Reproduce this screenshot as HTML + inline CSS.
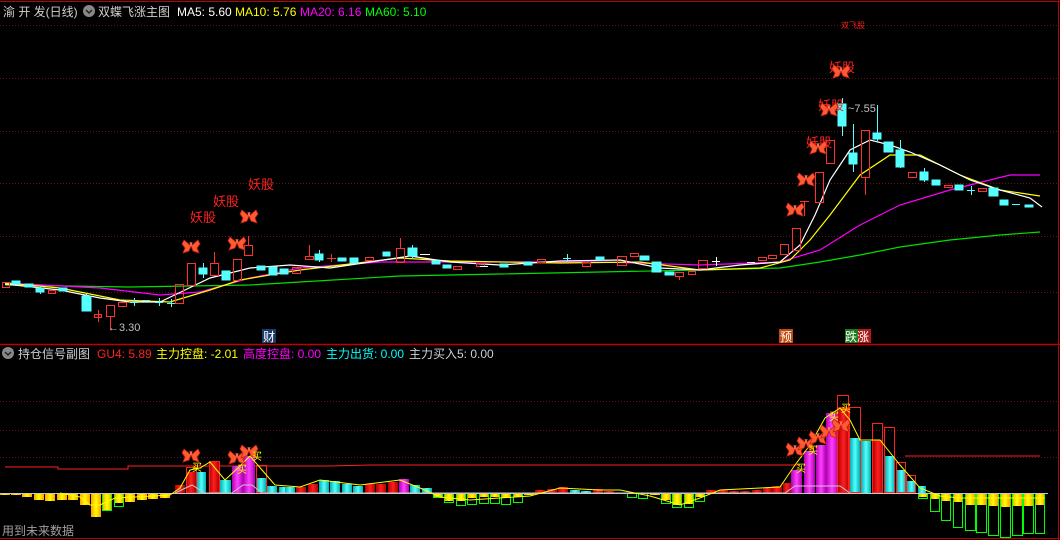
<!DOCTYPE html>
<html><head><meta charset="utf-8"><style>
html,body{margin:0;padding:0;background:#000;width:1060px;height:540px;overflow:hidden}
svg{display:block}
text{font-family:"Liberation Sans","Noto Sans CJK SC",sans-serif}
</style></head><body>
<svg width="1060" height="540" viewBox="0 0 1060 540" xmlns="http://www.w3.org/2000/svg">
<defs>
<linearGradient id="yg" x1="0" x2="1" y1="0" y2="0"><stop offset="0" stop-color="#ffa000"/><stop offset="0.5" stop-color="#ffff00"/><stop offset="1" stop-color="#ffa000"/></linearGradient>
<linearGradient id="cg" x1="0" x2="1"><stop offset="0" stop-color="#00b0b0"/><stop offset="0.5" stop-color="#55ffff"/><stop offset="1" stop-color="#00b0b0"/></linearGradient>
<linearGradient id="rg" x1="0" x2="1"><stop offset="0" stop-color="#b00000"/><stop offset="0.5" stop-color="#ff2020"/><stop offset="1" stop-color="#b00000"/></linearGradient>
<linearGradient id="mg" x1="0" x2="1"><stop offset="0" stop-color="#b000b0"/><stop offset="0.5" stop-color="#ff40ff"/><stop offset="1" stop-color="#b000b0"/></linearGradient>
<g id="bf"><path d="M0 0 L-7 -6 L-9 -2 L-6 2 L-8 7 L-2 5 Z M0 0 L7 -6 L9 -2 L6 2 L8 7 L2 5 Z" fill="#ff5a32" stroke="#c02010" stroke-width="0.8"/><path d="M-1 -4 L0 0 L1 -4" stroke="#ff8060" fill="none"/></g>
</defs>
<line x1="0" y1="1.5" x2="1060" y2="1.5" stroke="#c00000"/>
<line x1="1058.5" y1="0" x2="1058.5" y2="540" stroke="#c00000"/>
<line x1="0" y1="344.5" x2="1060" y2="344.5" stroke="#c00000" stroke-width="1.5"/>
<line x1="0" y1="538.5" x2="1060" y2="538.5" stroke="#c00000"/>
<g stroke="#6a1010" stroke-dasharray="1 2">
<line x1="0" y1="25.5" x2="1058" y2="25.5"/><line x1="0" y1="78.5" x2="1058" y2="78.5"/><line x1="0" y1="131.5" x2="1058" y2="131.5"/><line x1="0" y1="183.5" x2="1058" y2="183.5"/><line x1="0" y1="236.5" x2="1058" y2="236.5"/><line x1="0" y1="292.5" x2="1058" y2="292.5"/>
<line x1="0" y1="401.5" x2="1058" y2="401.5"/><line x1="0" y1="430.5" x2="1058" y2="430.5"/><line x1="0" y1="457.5" x2="1058" y2="457.5"/>
</g>
<text x="3" y="16" font-size="12" fill="#d0d0d0">渝 开 发(日线)</text>
<circle cx="89" cy="11" r="6" fill="#888"/><path d="M86 10 L89 13 L92 10" stroke="#222" fill="none" stroke-width="1.5"/>
<text x="98" y="16" font-size="12" fill="#d0d0d0">双蝶飞涨主图</text>
<text x="177" y="16" font-size="12" fill="#ffffff">MA5: 5.60</text>
<text x="235" y="16" font-size="12" fill="#ffff00">MA10: 5.76</text>
<text x="300" y="16" font-size="12" fill="#ff00ff">MA20: 6.16</text>
<text x="365" y="16" font-size="12" fill="#00ff00">MA60: 5.10</text>
<text x="841" y="28" font-size="8" fill="#ff2020">双飞股</text>
<g fill="none" stroke-width="1.2">
<polyline stroke="#00e000" points="5,285 130,287 250,285 300,282 400,276 500,274 600,272 700,270 780,268 820,262 860,255 900,247 950,240 1000,235 1040,232"/>
<polyline stroke="#ff00ff" points="5,283 100,288 160,295 200,292 250,278 300,268 380,262 450,262 600,262 700,265 780,262 820,250 860,225 900,205 950,190 990,180 1010,175 1040,175"/>
<polyline stroke="#ffff00" points="5,283 60,288 120,300 170,302 210,290 240,280 300,270 400,258 450,261 560,263 640,262 700,270 760,268 790,260 810,240 830,215 860,175 890,155 920,155 960,175 1000,190 1040,196"/>
<polyline stroke="#ffffff" points="5,284 60,290 100,298 130,302 160,302 185,290 210,278 250,268 290,265 330,268 370,262 410,256 450,262 500,265 560,261 620,260 660,268 700,270 740,265 780,262 800,245 815,215 830,180 850,150 870,140 890,145 910,152 940,165 970,180 1000,190 1030,198 1042,207"/>
</g>
<g fill="#55ffff" stroke="#55ffff">
<rect x="12" y="281" width="8" height="3"/><rect x="25" y="284" width="8" height="3"/><rect x="36" y="288" width="8" height="4"/><rect x="59" y="288" width="8" height="3"/>
<rect x="82" y="296" width="9" height="15"/><rect x="199" y="268" width="8" height="6"/><rect x="222" y="271" width="8" height="9"/><rect x="257" y="266" width="8" height="4"/><rect x="269" y="267" width="8" height="8"/><rect x="280" y="269" width="8" height="5"/><rect x="315" y="254" width="8" height="6"/><rect x="338" y="258" width="8" height="3"/><rect x="350" y="258" width="8" height="5"/><rect x="383" y="252" width="7" height="4"/><rect x="408" y="248" width="9" height="8"/><rect x="432" y="261" width="8" height="3"/><rect x="443" y="265" width="8" height="3"/><rect x="500" y="264" width="8" height="3"/><rect x="524" y="262" width="8" height="3"/><rect x="596" y="257" width="8" height="3"/><rect x="640" y="256" width="9" height="4"/><rect x="652" y="262" width="9" height="10"/><rect x="665" y="272" width="9" height="3"/>
<rect x="838" y="104" width="8" height="22"/><rect x="849" y="153" width="8" height="11"/><rect x="873" y="133" width="8" height="6"/><rect x="884" y="142" width="9" height="10"/><rect x="896" y="150" width="8" height="17"/><rect x="920" y="172" width="8" height="8"/><rect x="932" y="180" width="8" height="5"/><rect x="955" y="185" width="8" height="5"/><rect x="989" y="188" width="9" height="8"/><rect x="1000" y="200" width="8" height="5"/><rect x="1025" y="205" width="8" height="2"/>
</g>
<g stroke="#55ffff">
<line x1="40.5" y1="286" x2="40.5" y2="294"/><line x1="86.5" y1="294" x2="86.5" y2="311"/><line x1="203.5" y1="263" x2="203.5" y2="278"/><line x1="319.5" y1="250" x2="319.5" y2="262"/><line x1="412.5" y1="245" x2="412.5" y2="258"/>
<line x1="842.5" y1="98" x2="842.5" y2="136"/><line x1="853.5" y1="124" x2="853.5" y2="172"/><line x1="877.5" y1="105" x2="877.5" y2="142"/><line x1="900.5" y1="140" x2="900.5" y2="168"/><line x1="924.5" y1="168" x2="924.5" y2="182"/>
<line x1="130" y1="302.5" x2="138" y2="302.5"/><line x1="142" y1="300.5" x2="150" y2="300.5"/><line x1="155" y1="302.5" x2="163" y2="302.5"/><line x1="167" y1="303.5" x2="176" y2="303.5"/><line x1="134.5" y1="298" x2="134.5" y2="306"/><line x1="159.5" y1="298" x2="159.5" y2="306"/><line x1="171.5" y1="299" x2="171.5" y2="307"/>
<line x1="563" y1="258.5" x2="571" y2="258.5"/><line x1="567.5" y1="254" x2="567.5" y2="262"/><line x1="967" y1="190.5" x2="975" y2="190.5"/><line x1="971.5" y1="186" x2="971.5" y2="195"/><line x1="1012" y1="204.5" x2="1020" y2="204.5"/>
</g>
<g fill="none" stroke="#ff3030">
<rect x="2.5" y="282.5" width="7" height="5"/><rect x="48.5" y="290.5" width="7" height="3"/><rect x="94.5" y="314.5" width="7" height="3"/><rect x="106.5" y="305.5" width="8" height="11"/><rect x="118.5" y="302.5" width="8" height="4"/><rect x="175.5" y="284.5" width="8" height="19"/><rect x="187.5" y="263.5" width="8" height="22"/><rect x="210.5" y="263.5" width="8" height="12"/><rect x="233.5" y="259.5" width="8" height="21"/><rect x="244.5" y="245.5" width="8" height="10"/><rect x="292.5" y="267.5" width="8" height="6"/><rect x="305.5" y="256.5" width="8" height="3"/><rect x="365.5" y="257.5" width="8" height="3"/><rect x="396.5" y="248.5" width="8" height="14"/><rect x="453.5" y="266.5" width="8" height="3"/><rect x="476.5" y="263.5" width="8" height="3"/><rect x="537.5" y="259.5" width="8" height="3"/><rect x="582.5" y="262.5" width="8" height="4"/><rect x="617.5" y="256.5" width="9" height="9"/><rect x="630.5" y="253.5" width="8" height="3"/><rect x="675.5" y="272.5" width="8" height="4"/><rect x="688.5" y="271.5" width="7" height="3"/><rect x="698.5" y="260.5" width="9" height="8"/><rect x="758.5" y="257.5" width="8" height="3"/><rect x="768.5" y="255.5" width="8" height="3"/><rect x="780.5" y="244.5" width="8" height="10"/><rect x="792.5" y="228.5" width="8" height="22"/><rect x="815.5" y="172.5" width="8" height="30"/><rect x="826.5" y="140.5" width="8" height="23"/><rect x="861.5" y="130.5" width="8" height="47"/><rect x="908.5" y="172.5" width="8" height="5"/><rect x="944.5" y="185.5" width="8" height="2"/><rect x="978.5" y="188.5" width="8" height="3"/>
<line x1="98.5" y1="310" x2="98.5" y2="322"/><line x1="110.5" y1="316" x2="110.5" y2="330"/><line x1="214.5" y1="252" x2="214.5" y2="263"/><line x1="248.5" y1="236" x2="248.5" y2="245"/><line x1="309.5" y1="245" x2="309.5" y2="256"/><line x1="400.5" y1="238" x2="400.5" y2="248"/><line x1="679.5" y1="276" x2="679.5" y2="280"/><line x1="804.5" y1="201" x2="804.5" y2="216"/><line x1="800" y1="201.5" x2="809" y2="201.5"/><line x1="865.5" y1="177" x2="865.5" y2="195"/><line x1="327" y1="258.5" x2="336" y2="258.5"/><line x1="331.5" y1="254" x2="331.5" y2="262"/>
</g>
<g stroke="#ffffff"><line x1="420" y1="254.5" x2="430" y2="254.5"/><line x1="712" y1="261.5" x2="720" y2="261.5"/><line x1="716.5" y1="257" x2="716.5" y2="266"/><line x1="747" y1="262.5" x2="755" y2="262.5"/><line x1="480" y1="266.5" x2="488" y2="266.5"/></g>
<g font-size="13" fill="#ff2020"><text x="190" y="222">妖股</text><text x="213" y="206">妖股</text><text x="248" y="189">妖股</text><text x="806" y="147">妖股</text><text x="818" y="110">妖股</text><text x="829" y="72">妖股</text></g>
<g><use href="#bf" x="191" y="246"/><use href="#bf" x="237" y="243"/><use href="#bf" x="249" y="216"/><use href="#bf" x="795" y="209"/><use href="#bf" x="806" y="179"/><use href="#bf" x="818" y="147"/><use href="#bf" x="829" y="109"/><use href="#bf" x="841" y="71"/></g>
<text x="848" y="112" font-size="11" fill="#c0c0c0">~7.55</text>
<text x="108" y="331" font-size="11" fill="#c0c0c0">←3.30</text>
<rect x="262" y="329" width="14" height="14" fill="#1a3a6a"/><text x="263" y="341" font-size="12" fill="#fff">财</text>
<rect x="779" y="329" width="14" height="14" fill="#c04a10"/><text x="780" y="341" font-size="12" fill="#fff">预</text>
<rect x="845" y="329" width="13" height="14" fill="#1a7a1a"/><rect x="858" y="329" width="13" height="14" fill="#b01818"/><text x="845" y="341" font-size="12" fill="#fff">跌涨</text>
<circle cx="8" cy="353" r="6" fill="#888"/><path d="M5 352 L8 355 L11 352" stroke="#222" fill="none" stroke-width="1.5"/>
<text x="18" y="358" font-size="12" fill="#d0d0d0">持仓信号副图</text>
<text x="97" y="358" font-size="12" fill="#ff2020">GU4: 5.89</text>
<text x="156" y="358" font-size="12" fill="#ffff00">主力控盘: -2.01</text>
<text x="243" y="358" font-size="12" fill="#ff00ff">高度控盘: 0.00</text>
<text x="326" y="358" font-size="12" fill="#00ffff">主力出货: 0.00</text>
<text x="409" y="358" font-size="12" fill="#d0d0d0">主力买入5: 0.00</text>
<polyline fill="none" stroke="#ff2020" points="5,467 58,467 58,469 128,469 128,466 330,466 370,465 800,465"/>
<polyline fill="none" stroke="#ff2020" points="905,456 1040,456"/>
<g fill="url(#yg)">
<rect x="0" y="493" width="10" height="2"/><rect x="11" y="493" width="10" height="2"/><rect x="22" y="493" width="10" height="4"/><rect x="34" y="493" width="10" height="7"/><rect x="45" y="493" width="10" height="8"/><rect x="57" y="493" width="10" height="7"/><rect x="68" y="493" width="10" height="7"/><rect x="80" y="493" width="10" height="12"/><rect x="91" y="493" width="10" height="24"/><rect x="102" y="493" width="10" height="18"/><rect x="114" y="493" width="10" height="10"/><rect x="125" y="493" width="10" height="9"/><rect x="137" y="493" width="10" height="7"/><rect x="148" y="493" width="10" height="6"/><rect x="160" y="493" width="10" height="5"/>
<rect x="433" y="493" width="10" height="4"/><rect x="444" y="493" width="10" height="8"/><rect x="456" y="493" width="10" height="8"/><rect x="467" y="493" width="10" height="5"/><rect x="479" y="493" width="10" height="4"/><rect x="490" y="493" width="10" height="4"/><rect x="501" y="493" width="10" height="5"/><rect x="513" y="493" width="10" height="4"/><rect x="524" y="493" width="10" height="2"/>
<rect x="650" y="493" width="10" height="2"/><rect x="661" y="493" width="10" height="7"/><rect x="672" y="493" width="10" height="12"/><rect x="684" y="493" width="10" height="11"/><rect x="695" y="493" width="10" height="4"/>
<rect x="918" y="493" width="10" height="4"/><rect x="930" y="493" width="10" height="6"/><rect x="941" y="493" width="10" height="8"/><rect x="953" y="493" width="10" height="9"/><rect x="965" y="493" width="10" height="12"/><rect x="976" y="493" width="10" height="12"/><rect x="988" y="493" width="10" height="13"/><rect x="1000" y="493" width="10" height="14"/><rect x="1012" y="493" width="10" height="13"/><rect x="1023" y="493" width="10" height="13"/><rect x="1035" y="493" width="10" height="12"/>
</g>
<g fill="none" stroke="#00ff00">
<rect x="102.5" y="493.5" width="9" height="17"/><rect x="114.5" y="493.5" width="9" height="13"/>
<rect x="433.5" y="493.5" width="9" height="4"/><rect x="444.5" y="493.5" width="9" height="9"/><rect x="456.5" y="493.5" width="9" height="12"/><rect x="467.5" y="493.5" width="9" height="11"/><rect x="479.5" y="493.5" width="9" height="10"/><rect x="490.5" y="493.5" width="9" height="10"/><rect x="501.5" y="493.5" width="9" height="11"/><rect x="513.5" y="493.5" width="9" height="9"/>
<rect x="627.5" y="493.5" width="9" height="4"/><rect x="638.5" y="493.5" width="9" height="5"/><rect x="661.5" y="493.5" width="9" height="10"/><rect x="672.5" y="493.5" width="9" height="14"/><rect x="684.5" y="493.5" width="9" height="14"/><rect x="695.5" y="493.5" width="9" height="8"/>
<rect x="918.5" y="493.5" width="9" height="5"/><rect x="930.5" y="493.5" width="9" height="18"/><rect x="941.5" y="493.5" width="9" height="27"/><rect x="953.5" y="493.5" width="9" height="34"/><rect x="965.5" y="493.5" width="10" height="37"/><rect x="976.5" y="493.5" width="10" height="39"/><rect x="988.5" y="493.5" width="10" height="42"/><rect x="1000.5" y="493.5" width="10" height="44"/><rect x="1012.5" y="493.5" width="10" height="42"/><rect x="1023.5" y="493.5" width="10" height="40"/><rect x="1035.5" y="493.5" width="9" height="40"/>
</g>
<g fill="url(#rg)">
<rect x="175" y="485" width="10" height="8"/><rect x="186" y="472" width="10" height="21"/><rect x="209" y="462" width="10" height="31"/><rect x="296" y="487" width="10" height="6"/><rect x="308" y="484" width="10" height="9"/><rect x="365" y="484" width="10" height="9"/><rect x="376" y="484" width="10" height="9"/><rect x="388" y="482" width="10" height="11"/>
<rect x="535" y="490" width="10" height="3"/><rect x="547" y="489" width="10" height="4"/><rect x="558" y="487" width="10" height="6"/><rect x="593" y="489" width="10" height="4"/><rect x="604" y="491" width="10" height="2"/><rect x="706" y="490" width="10" height="3"/><rect x="718" y="490" width="10" height="3"/><rect x="729" y="491" width="10" height="2"/><rect x="740" y="491" width="10" height="2"/><rect x="752" y="490" width="10" height="3"/><rect x="763" y="488" width="9" height="5"/><rect x="772" y="486" width="10" height="7"/><rect x="783" y="483" width="8" height="10"/>
<rect x="838" y="407" width="11" height="86"/><rect x="873" y="440" width="10" height="53"/>
</g>
<g fill="url(#cg)">
<rect x="197" y="472" width="9" height="21"/><rect x="220" y="480" width="11" height="13"/><rect x="256" y="478" width="10" height="15"/><rect x="267" y="486" width="10" height="7"/><rect x="279" y="487" width="10" height="6"/><rect x="285" y="487" width="10" height="6"/><rect x="319" y="480" width="10" height="13"/><rect x="330" y="481" width="10" height="12"/><rect x="342" y="484" width="10" height="9"/><rect x="353" y="486" width="10" height="7"/><rect x="410" y="485" width="10" height="8"/><rect x="422" y="488" width="10" height="5"/>
<rect x="570" y="490" width="10" height="3"/><rect x="581" y="491" width="10" height="2"/><rect x="850" y="438" width="10" height="55"/><rect x="861" y="441" width="10" height="52"/><rect x="885" y="456" width="10" height="37"/><rect x="897" y="470" width="9" height="23"/><rect x="907" y="481" width="9" height="12"/><rect x="918" y="486" width="8" height="7"/>
</g>
<g fill="url(#mg)">
<rect x="232" y="466" width="11" height="27"/><rect x="243" y="456" width="12" height="37"/><rect x="399" y="479" width="10" height="14"/>
<rect x="791" y="470" width="11" height="23"/><rect x="804" y="451" width="11" height="42"/><rect x="816" y="445" width="10" height="48"/><rect x="826" y="413" width="12" height="80"/>
</g>
<g fill="none" stroke="#ff2020">
<rect x="186.5" y="467.5" width="10" height="25"/><rect x="209.5" y="461.5" width="10" height="31"/><rect x="256.5" y="465.5" width="10" height="27"/>
<rect x="837.5" y="395.5" width="11" height="97"/><rect x="849.5" y="407.5" width="11" height="85"/><rect x="872.5" y="423.5" width="10" height="69"/><rect x="884.5" y="427.5" width="10" height="65"/><rect x="896.5" y="462.5" width="9" height="30"/><rect x="906.5" y="475.5" width="9" height="17"/>
</g>
<line x1="0" y1="493.5" x2="1048" y2="493.5" stroke="#c8c8c8"/>
<polyline fill="none" stroke="#c8c8c8" points="175,493 192,485 205,493 232,493 243,485 252,485 262,493 785,493 795,486 840,486 850,493"/>
<polyline fill="none" stroke="#ffff00" points="60,493 80,497 90,505 100,505 115,498 135,497 170,495 180,488 190,470 200,468 210,462 225,480 240,466 250,456 262,470 275,485 300,487 320,480 360,485 400,480 420,488 440,497 470,500 530,496 560,488 600,490 620,490 650,496 680,505 700,498 720,490 780,487 795,465 810,445 825,418 840,408 850,420 860,440 880,440 900,465 920,488 940,496 960,498 1045,498"/>
<g><use href="#bf" x="191" y="455"/><use href="#bf" x="237" y="457"/><use href="#bf" x="249" y="451"/><use href="#bf" x="795" y="449"/><use href="#bf" x="806" y="443"/><use href="#bf" x="818" y="437"/><use href="#bf" x="829" y="431"/><use href="#bf" x="841" y="425"/></g>
<g font-size="10" fill="#ffff00"><text x="192" y="471">买</text><text x="237" y="473">买</text><text x="252" y="460">买</text><text x="796" y="472">买</text><text x="808" y="454">买</text><text x="829" y="420">买</text><text x="841" y="412">买</text></g>
<text x="2" y="535" font-size="12" fill="#a0a0a0">用到未来数据</text>
</svg>
</body></html>
